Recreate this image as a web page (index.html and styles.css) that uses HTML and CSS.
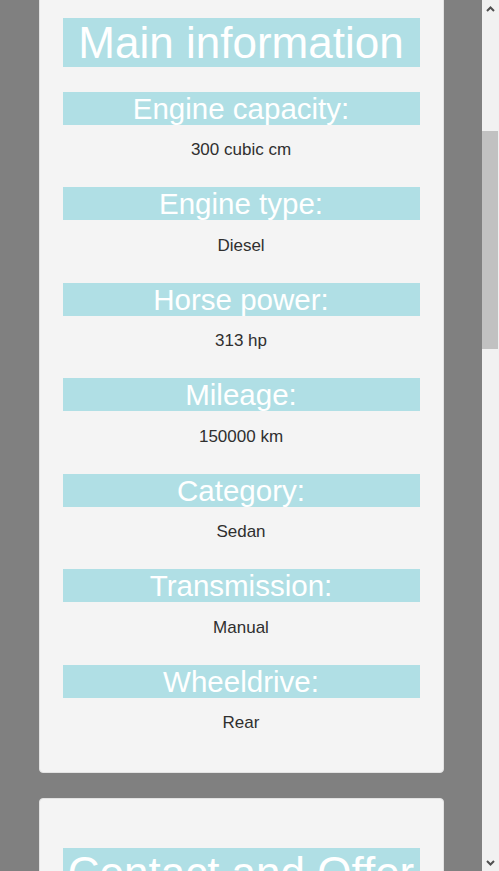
FILE: index.html
```html
<!DOCTYPE html>
<html lang="en">
<head>
<meta charset="utf-8">
<title>Car details</title>
<link rel="stylesheet" href="styles.css">
</head>
<body>
<div class="window">
<div class="scroller" id="scroller">
<main class="page">
  <section class="card card-intro"></section>
  <section class="card">
    <h1 class="card-title">Main information</h1>
    <div class="item"><h2 class="item-label">Engine capacity:</h2><p class="item-value">300 cubic cm</p></div>
    <div class="item"><h2 class="item-label">Engine type:</h2><p class="item-value">Diesel</p></div>
    <div class="item"><h2 class="item-label">Horse power:</h2><p class="item-value">313 hp</p></div>
    <div class="item"><h2 class="item-label">Mileage:</h2><p class="item-value">150000 km</p></div>
    <div class="item"><h2 class="item-label">Category:</h2><p class="item-value">Sedan</p></div>
    <div class="item"><h2 class="item-label">Transmission:</h2><p class="item-value">Manual</p></div>
    <div class="item"><h2 class="item-label">Wheeldrive:</h2><p class="item-value">Rear</p></div>
  </section>
  <section class="card card-contact">
    <h1 class="card-title">Contact and Offer</h1>
  </section>
</main>
</div>
<div class="scrollbar" aria-hidden="true">
  <div class="sb-btn"><svg width="9" height="6" viewBox="0 0 9 6"><path d="M1 5 L4.5 1.5 L8 5" fill="none" stroke="#505050" stroke-width="2"/></svg></div>
  <div class="sb-track"><div class="sb-thumb"></div></div>
  <div class="sb-btn"><svg width="9" height="6" viewBox="0 0 9 6"><path d="M1 1 L4.5 4.5 L8 1" fill="none" stroke="#505050" stroke-width="2"/></svg></div>
</div>
</div>
<script src="script.js"></script>
</body>
</html>
```
FILE: styles.css
```css
html, body { height: 100%; }

body {
  margin: 0;
  overflow: hidden;
  background: #808080;
  font-family: "Liberation Sans", Arial, sans-serif;
}

.window {
  display: flex;
  height: 100vh;
}

.scroller {
  flex: 1;
  min-width: 0;
  height: 100vh;
  overflow-y: scroll;
  overflow-x: hidden;
  scrollbar-width: none;
}
.scroller::-webkit-scrollbar { width: 0; height: 0; }

.scrollbar {
  flex: none;
  width: 17px;
  height: 100vh;
  background: #f1f1f1;
  display: flex;
  flex-direction: column;
}

.sb-btn {
  flex: none;
  height: 17px;
  display: flex;
  align-items: center;
  justify-content: center;
}
.sb-btn svg { display: block; }

.sb-track {
  flex: 1;
  padding: 114px 1px 0 0;
}

.sb-thumb {
  height: 218px;
  background: #c1c1c1;
}

.page {
  max-width: 405px;
  margin: 0 auto;
  padding: 25px 0;
  display: flex;
  flex-direction: column;
  gap: 25px;
}

.card {
  box-sizing: border-box;
  background: #f4f4f4;
  border: 1px solid #e2e2e2;
  border-radius: 4px;
  padding: 49px 23px 24px;
}

.card-intro { padding: 0; height: 372.5px; }
.card-contact { min-height: 2066px; }

.card-title {
  margin: 0 0 25px;
  background: #b0dfe5;
  color: #fff;
  font-weight: normal;
  font-size: 44px;
  line-height: 49px;
  text-align: center;
  white-space: nowrap;
  overflow: hidden;
}

.item + .item { margin-top: 28px; }

.item-label {
  margin: 0;
  background: #b0dfe5;
  color: #fff;
  font-weight: normal;
  font-size: 29.5px;
  line-height: 33px;
  text-align: center;
}

.item-value {
  margin: 16.5px 0 16px;
  color: #2f2f2f;
  font-size: 17px;
  line-height: 18px;
  text-align: center;
}
```
FILE: script.js
```js
document.getElementById("scroller").scrollTop = 455;
```
